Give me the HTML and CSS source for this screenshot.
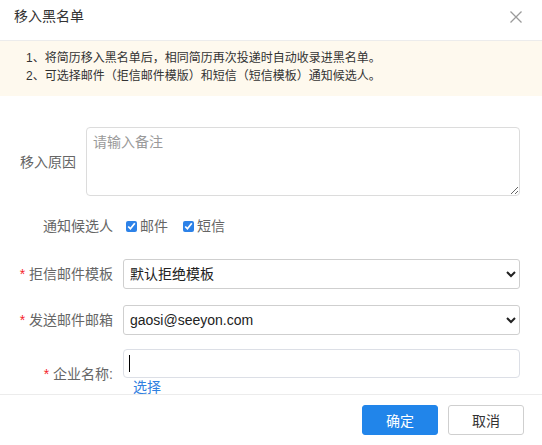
FILE: index.html
```html
<!DOCTYPE html>
<html lang="zh-CN">
<head>
<meta charset="utf-8">
<title>移入黑名单</title>
<link rel="stylesheet" href="styles.css">
</head>
<body>
<div class="dialog">
  <header class="dialog-head">
    <span class="dialog-title">移入黑名单</span>
    <button class="close" aria-label="关闭">
      <svg width="12" height="12" viewBox="0 0 12 12"><path d="M0.5 0.5 L11.5 11.5 M11.5 0.5 L0.5 11.5" stroke="#9a9a9a" stroke-width="1.3" fill="none"/></svg>
    </button>
  </header>
  <div class="dialog-body">
    <div class="notice">
      <p>1、将简历移入黑名单后，相同简历再次投递时自动收录进黑名单。</p>
      <p>2、可选择邮件（拒信邮件模版）和短信（短信模板）通知候选人。</p>
    </div>
    <form class="form">
      <div class="row row-reason">
        <label class="label label-short">移入原因</label>
        <textarea class="reason" placeholder="请输入备注"></textarea>
      </div>
      <div class="row row-notify">
        <label class="label">通知候选人</label>
        <div class="checks">
          <label class="check"><input type="checkbox" checked>邮件</label>
          <label class="check"><input type="checkbox" checked>短信</label>
        </div>
      </div>
      <div class="row row-template">
        <label class="label"><span class="req">*</span> 拒信邮件模板</label>
        <select class="select"><option>默认拒绝模板</option></select>
      </div>
      <div class="row row-mailbox">
        <label class="label"><span class="req">*</span> 发送邮件邮箱</label>
        <select class="select"><option>gaosi@seeyon.com</option></select>
      </div>
      <div class="row row-company">
        <label class="label label-low"><span class="req">*</span> 企业名称:</label>
        <div class="company">
          <div class="field">
            <input class="text" type="text" autofocus>
            <span class="caret"></span>
          </div>
          <a class="pick" href="#">选择</a>
        </div>
      </div>
    </form>
  </div>
  <footer class="dialog-foot">
    <button class="btn btn-primary">确定</button>
    <button class="btn">取消</button>
  </footer>
</div>
</body>
</html>
```

FILE: styles.css
```css
html, body {
  margin: 0;
  padding: 0;
  background: #fff;
}

body {
  font-family: "Liberation Sans", "Noto Sans CJK SC", sans-serif;
  font-size: 14px;
  color: #333;
}

.dialog {
  width: 542px;
  height: 445px;
  display: flex;
  flex-direction: column;
  overflow: hidden;
}

.dialog-head {
  height: 41px;
  border-bottom: 1px solid #ececec;
  display: flex;
  align-items: center;
  justify-content: space-between;
  padding: 0 20px 0 14px;
  box-sizing: border-box;
  flex: none;
}

.dialog-title {
  font-size: 14px;
  line-height: 20px;
  color: #333;
  margin-top: -8px;
}

.close {
  border: 0;
  background: none;
  padding: 0;
  width: 12px;
  height: 12px;
  display: flex;
  margin-top: -6px;
}

.dialog-body {
  height: 353px;
  overflow: hidden;
  flex: none;
}

.notice {
  background: #fef9ee;
  height: 55px;
  padding: 8px 0 0 26px;
  box-sizing: border-box;
}

.notice p {
  margin: 0;
  font-size: 12px;
  line-height: 18px;
  color: #333;
}

.form {
  display: flex;
  flex-direction: column;
}

.row {
  display: flex;
  align-items: center;
}

.label {
  width: 113px;
  flex: none;
  text-align: right;
  color: #666;
  font-size: 14px;
  line-height: 20px;
  margin-right: 10px;
}

.label-short {
  width: 76px;
}

.label-low {
  align-self: flex-start;
  padding-top: 15px;
}

.req {
  color: #f5222d;
}

.row-reason {
  margin-top: 31px;
}

.reason {
  width: 434px;
  height: 69px;
  box-sizing: border-box;
  border: 1px solid #dcdcdc;
  border-radius: 4px;
  padding: 4px 6px;
  margin: 0;
  font-family: inherit;
  font-size: 14px;
  line-height: 20px;
  color: #333;
  resize: vertical;
}

.reason::placeholder {
  color: #9a9a9a;
}

.row-notify {
  margin-top: 20px;
  height: 20px;
}

.checks {
  display: flex;
  align-items: center;
  gap: 12px;
}

.check {
  display: flex;
  align-items: center;
  color: #666;
  line-height: 20px;
}

.check input {
  width: 11px;
  height: 11px;
  margin: 0 3px 0 3px;
  accent-color: #2d82e8;
}

.row-template {
  margin-top: 23px;
}

.row-mailbox {
  margin-top: 16px;
}

.row-company {
  margin-top: 14px;
  align-items: flex-start;
}

.select {
  width: 397px;
  height: 30px;
  box-sizing: border-box;
  border: 1px solid #cfcfcf;
  border-radius: 3px;
  background: #fff;
  padding: 0 2px;
  margin: 0;
  font-family: inherit;
  font-size: 14px;
  color: #222;
}

.company {
  display: flex;
  flex-direction: column;
}

.field {
  position: relative;
  width: 397px;
  height: 29px;
}

.text {
  width: 397px;
  height: 29px;
  box-sizing: border-box;
  border: 1px solid #dcdfe6;
  border-radius: 4px;
  padding: 0 5px;
  margin: 0;
  font-family: inherit;
  font-size: 14px;
  outline: none;
  caret-color: transparent;
}

/* text cursor of the focused field */
.caret {
  position: absolute;
  left: 6px;
  top: 6px;
  width: 1px;
  height: 17px;
  background: #000;
}

.pick {
  margin: 2px 0 0 10px;
  color: #2f80e0;
  text-decoration: none;
  font-size: 14px;
  line-height: 15px;
}

.dialog-foot {
  flex: none;
  border-top: 1px solid #ececec;
  display: flex;
  justify-content: flex-end;
  gap: 10px;
  padding: 10px 18px 0 0;
  height: 50px;
}

.btn {
  width: 76px;
  height: 30px;
  box-sizing: border-box;
  border: 1px solid #cfcfcf;
  border-radius: 3px;
  background: #fff;
  color: #333;
  font-family: inherit;
  font-size: 14px;
  padding: 0;
}

.btn-primary {
  background: #2185ea;
  border-color: #2185ea;
  color: #fff;
}
```
